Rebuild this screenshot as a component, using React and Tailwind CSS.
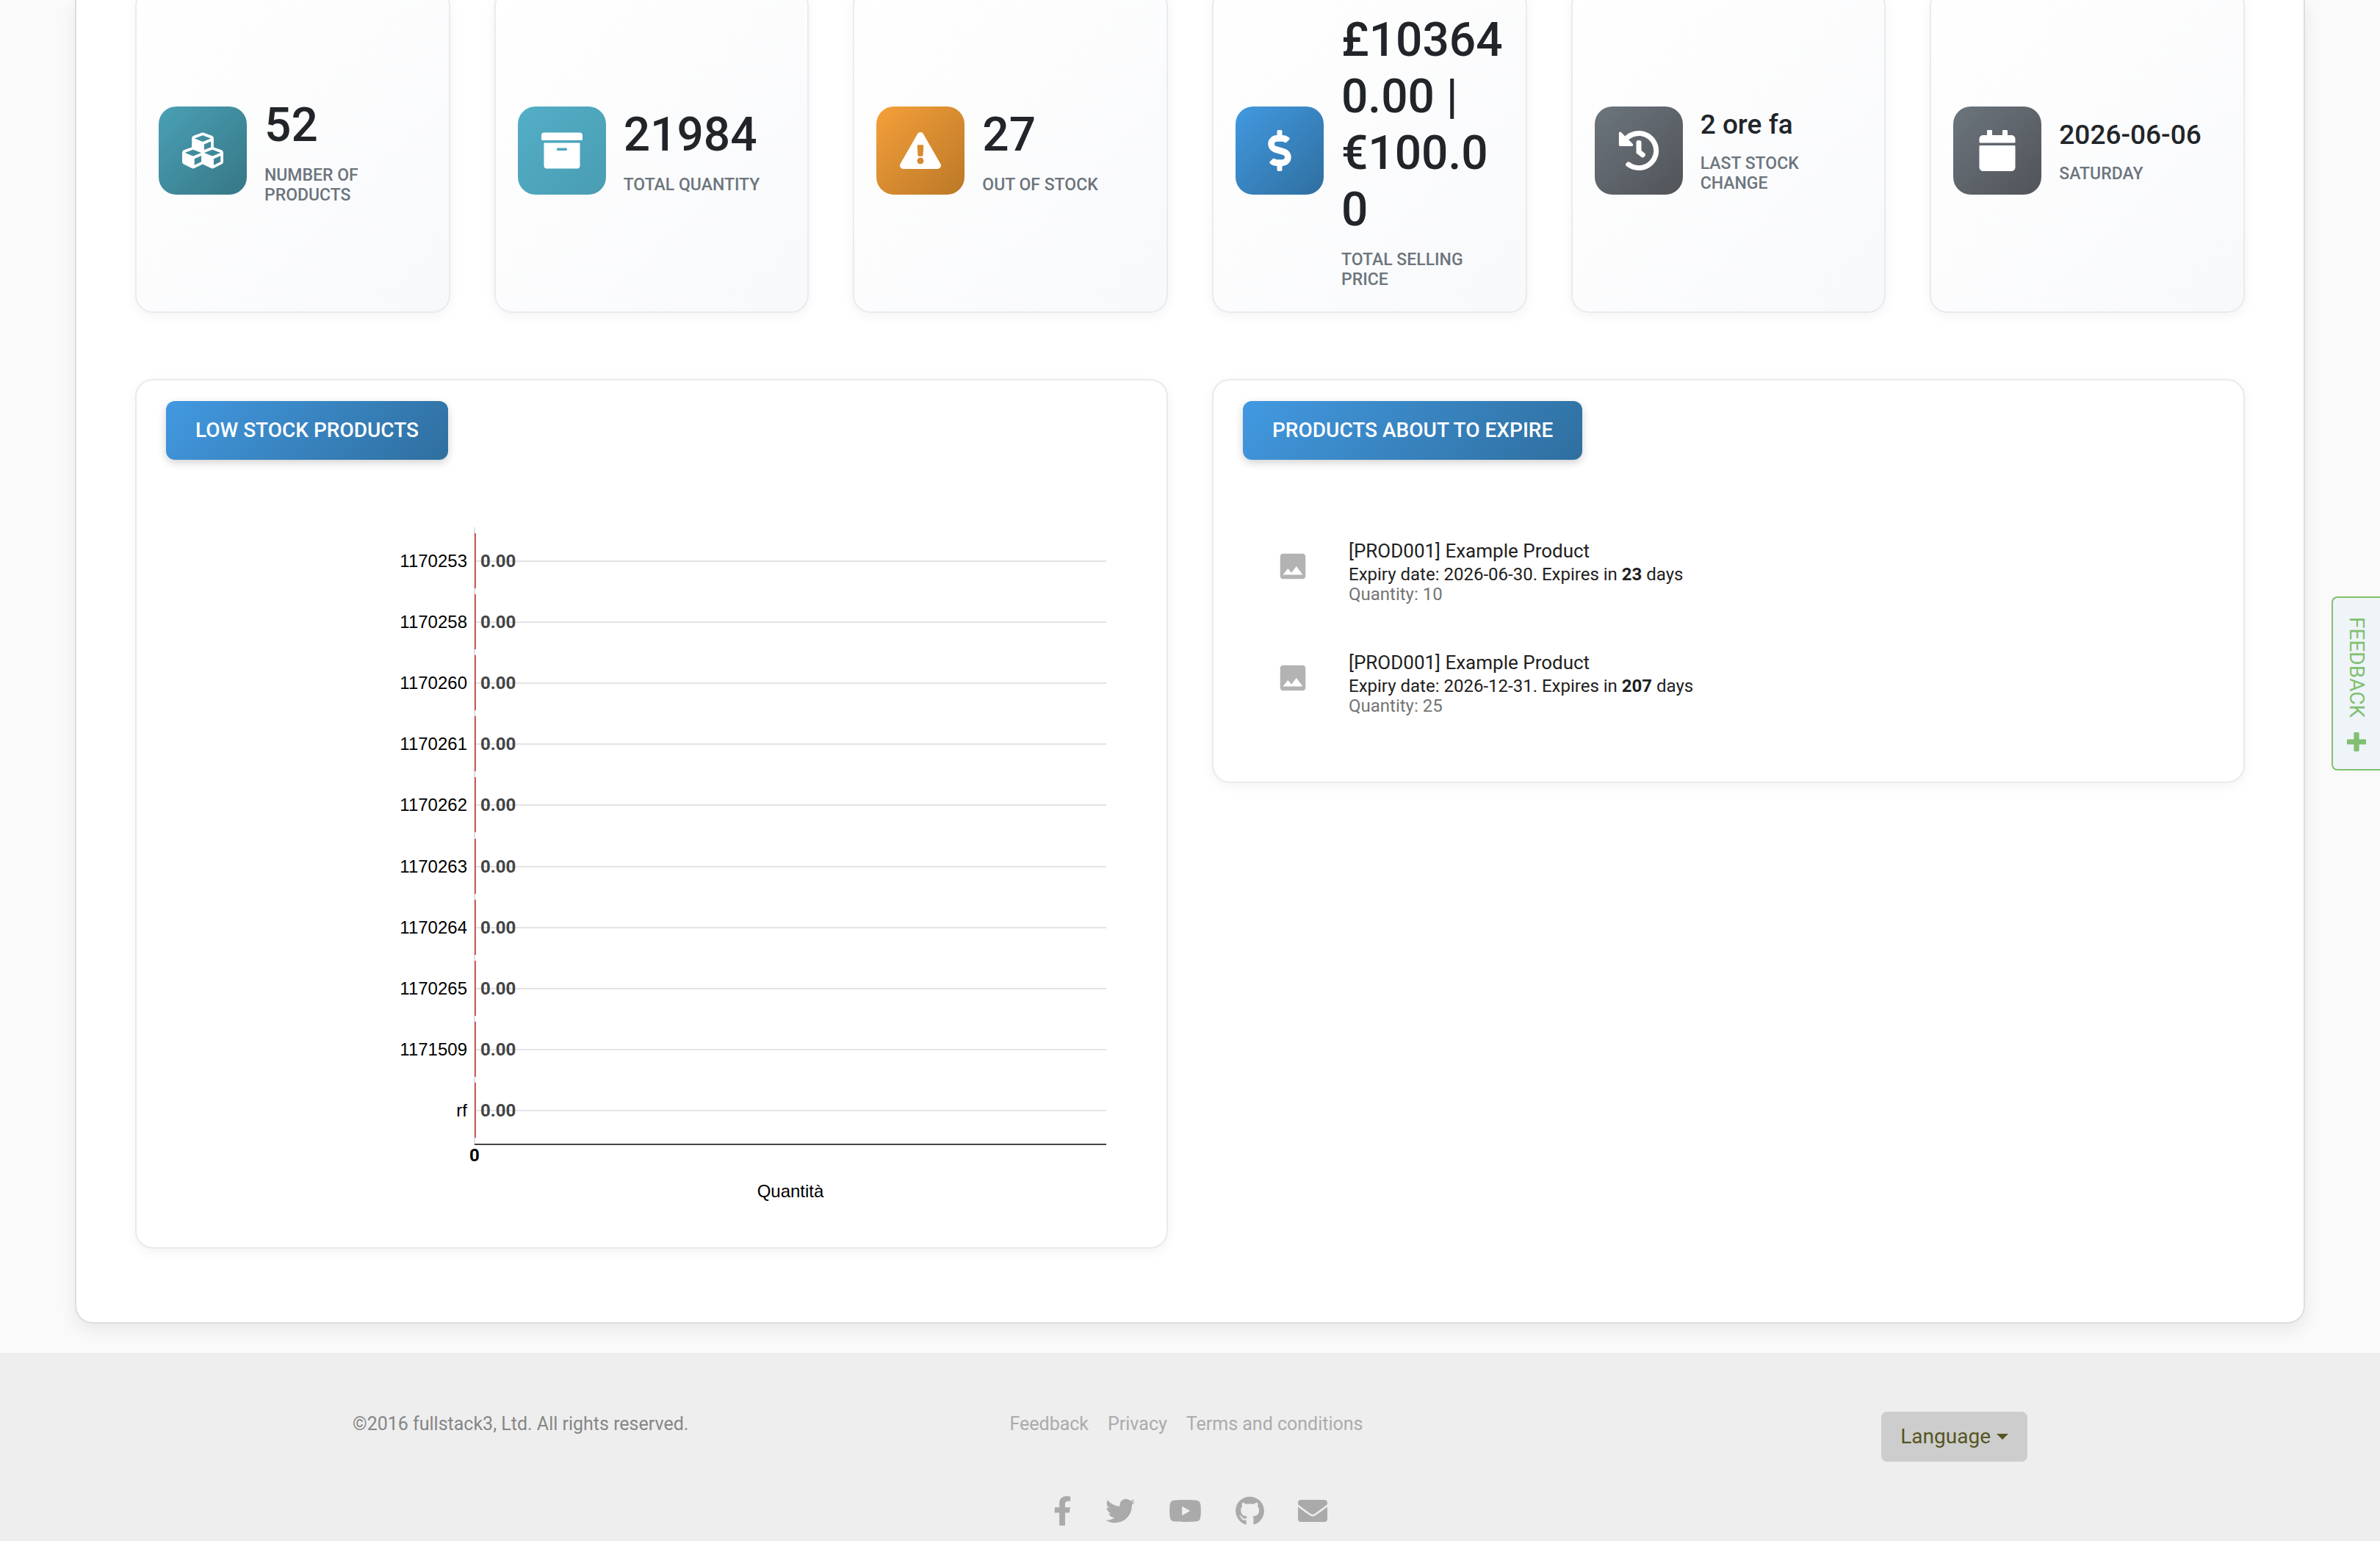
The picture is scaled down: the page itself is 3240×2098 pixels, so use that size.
import React from 'react';
import {
  FaCubes,
  FaArchive,
  FaExclamationTriangle,
  FaDollarSign,
  FaHistory,
  FaCalendar,
  FaFacebookF,
  FaTwitter,
  FaYoutube,
  FaGithub,
  FaEnvelope
} from 'react-icons/fa';
import { MdImage } from 'react-icons/md';

const stats = [
  { id: 'products', value: '52', label: 'Number of products', icon: FaCubes, color: 'from-[#4aa0b5] to-[#367786]' },
  { id: 'quantity', value: '21984', label: 'Total quantity', icon: FaArchive, color: 'from-[#53aec6] to-[#499db3]' },
  { id: 'out', value: '27', label: 'Out of stock', icon: FaExclamationTriangle, color: 'from-[#f5a03a] to-[#bb7827]' },
  { id: 'price', value: '£103640.00 | €100.00', label: 'Total selling price', icon: FaDollarSign, color: 'from-[#4299e1] to-[#2f6f9f]' },
  { id: 'change', value: '2 ore fa', label: 'Last stock change', icon: FaHistory, color: 'from-[#6c757d] to-[#515459]', small: true },
  { id: 'date', value: '2026-06-06', label: 'Saturday', icon: FaCalendar, color: 'from-[#6c757d] to-[#515459]', small: true }
];

const lowStock = [
  { name: '1170253', quantity: 0 },
  { name: '1170258', quantity: 0 },
  { name: '1170260', quantity: 0 },
  { name: '1170261', quantity: 0 },
  { name: '1170262', quantity: 0 },
  { name: '1170263', quantity: 0 },
  { name: '1170264', quantity: 0 },
  { name: '1170265', quantity: 0 },
  { name: '1171509', quantity: 0 },
  { name: 'rf', quantity: 0 }
];

const expiring = [
  { id: 1, name: '[PROD001] Example Product', date: '2026-06-30', days: 23, quantity: 10 },
  { id: 2, name: '[PROD001] Example Product', date: '2026-12-31', days: 207, quantity: 25 }
];

const socials = [
  { label: 'Facebook', icon: FaFacebookF, width: 'w-[25px]' },
  { label: 'Twitter', icon: FaTwitter, width: 'w-10' },
  { label: 'YouTube', icon: FaYoutube, width: 'w-[45px]' },
  { label: 'GitHub', icon: FaGithub, width: 'w-[39px]' },
  { label: 'Email', icon: FaEnvelope, width: 'w-10' }
];

const PlusIcon = ({ className }) => (
  <svg viewBox="0 32 448 448" fill="currentColor" className={className} aria-hidden="true">
    <path d="M448 294.2v-76.4c0-13.3-10.7-24-24-24H286.2V56c0-13.3-10.7-24-24-24h-76.4c-13.3 0-24 10.7-24 24v137.8H24c-13.3 0-24 10.7-24 24v76.4c0 13.3 10.7 24 24 24h137.8V456c0 13.3 10.7 24 24 24h76.4c13.3 0 24-10.7 24-24V318.2H424c13.3 0 24-10.7 24-24z" />
  </svg>
);

const StatCard = ({ value, label, icon: Icon, color, small }) => (
  <div className="flex items-center gap-6 rounded-3xl border-2 border-[#e9ebef] bg-linear-135 from-white to-[#f8f9fb] p-[30px] shadow-[0_4px_16px_rgba(0,0,0,0.05)]">
    <div className={`flex size-[120px] shrink-0 items-center justify-center rounded-3xl bg-linear-135 text-white ${color}`}>
      <Icon className="size-14" />
    </div>
    <div className="min-w-0 flex-1">
      <p className={`font-medium text-[#212529] break-words ${small ? 'text-[37px] leading-[46px]' : 'text-[64px] leading-[77px]'}`}>
        {value}
      </p>
      <p className="mt-4 text-[23px] leading-[27px] font-medium text-[#6c757d] uppercase">{label}</p>
    </div>
  </div>
);

const Panel = ({ title, className, children }) => (
  <section className={`rounded-3xl border-2 border-[#e9eaef] bg-white px-10 pt-7 shadow-[0_4px_16px_rgba(0,0,0,0.05)] ${className}`}>
    <h2 className="inline-block rounded-xl bg-linear-135 from-[#4299e1] to-[#2f6f9f] px-10 text-[28px] leading-[80px] font-medium text-white uppercase shadow-[0_4px_12px_rgba(0,0,0,0.18)]">
      {title}
    </h2>
    {children}
  </section>
);

const LowStockChart = () => (
  <svg viewBox="0 0 1322 990" className="mt-10 block w-full" role="img" aria-label="Low stock products">
    <rect x="419" y="52" width="2" height="840" fill="#e0e0e0" />
    {lowStock.map((item, index) => {
      const y = 98 + Math.round(index * 83.1);
      return (
        <g key={item.name}>
          <rect x="420" y={y - 1} width="860" height="2" fill="#e4e4e4" />
          <rect x="420" y={y - 38} width="2" height="75" fill="#cf5b5b" />
          <text x="410" y={y + 8} textAnchor="end" className="fill-black font-['Liberation_Sans',sans-serif] text-[24px]">
            {item.name}
          </text>
          <text x="428" y={y + 8} className="fill-[#444] text-[24px] font-bold">
            {item.quantity.toFixed(2)}
          </text>
        </g>
      );
    })}
    <rect x="420" y="891" width="860" height="2" fill="#444" />
    <text x="420" y="915" textAnchor="middle" className="fill-black text-[24px] font-bold">0</text>
    <text x="850" y="964" textAnchor="middle" className="fill-black font-['Liberation_Sans',sans-serif] text-[24px]">
      Quantità
    </text>
  </svg>
);

const ExpiringProduct = ({ name, date, days, quantity }) => (
  <li className="flex gap-9 py-[30px] pl-7">
    <div className="flex size-20 shrink-0 items-center justify-center text-[#b3b3b3]">
      <MdImage className="size-[46px]" />
    </div>
    <div className="text-[24px] leading-[27px] text-[#212121]">
      <p className="text-[26px] leading-[38px]">{name}</p>
      <p>
        Expiry date: {date}. Expires in <strong className="font-bold">{days}</strong> days
      </p>
      <p className="text-[#757575]">Quantity: {quantity}</p>
    </div>
  </li>
);

const Footer = () => (
  <footer className="bg-[#eee] pt-20 pb-[21px]">
    <div className="mx-auto grid max-w-[2280px] grid-cols-3 text-[25px] leading-[34px]">
      <p className="text-[#868686]">©2016 fullstack3, Ltd. All rights reserved.</p>
      <nav className="flex justify-center gap-[26px] pr-[10px] text-[#ababab]">
        <a href="#feedback">Feedback</a>
        <a href="#privacy">Privacy</a>
        <a href="#terms">Terms and conditions</a>
      </nav>
      <button
        type="button"
        className="flex h-[68px] items-center gap-2 justify-self-end rounded-lg bg-[#cdcdcd] px-[26px] text-[28px] text-[#555522]"
      >
        Language
        <span className="border-x-8 border-t-8 border-x-transparent border-t-current"></span>
      </button>
    </div>
    <div className="mt-[47px] flex justify-center gap-[46px] text-[#aaa]">
      {socials.map(({ label, icon: Icon, width }) => (
        <a key={label} href={`#${label.toLowerCase()}`} aria-label={label}>
          <Icon className={`h-10 ${width}`} />
        </a>
      ))}
    </div>
  </footer>
);

const App = () => {
  return (
    <div className="relative min-h-screen overflow-hidden bg-[#fafafa] font-[Roboto,sans-serif]">
      <main className="mx-[102px] mb-10 flex flex-col rounded-b-3xl border-x-2 border-b-2 border-[#dedede] bg-white px-20 pb-[100px] shadow-[0_8px_24px_rgba(0,0,0,0.08)]">
        <div className="-mt-4 grid grid-cols-6 gap-[60px]">
          {stats.map(stat => (
            <StatCard key={stat.id} {...stat} />
          ))}
        </div>

        <div className="mt-[90px] grid grid-cols-2 items-start gap-[60px]">
          <Panel title="Low stock products" className="pb-[42px]">
            <LowStockChart />
          </Panel>
          <Panel title="Products about to expire" className="pb-[59px]">
            <ul className="mt-[75px]">
              {expiring.map(product => (
                <ExpiringProduct key={product.id} {...product} />
              ))}
            </ul>
          </Panel>
        </div>
      </main>

      <Footer />

      {/* Feedback tab on the right edge of the window */}
      <button
        type="button"
        className="absolute top-[812px] right-0 flex h-[237px] w-[66px] items-center gap-5 rounded-l-lg border-2 border-r-0 border-[#81c070] bg-[#eff4f9] px-[26px] text-[28px] leading-[64px] text-[#81c070] [writing-mode:vertical-rl]"
      >
        FEEDBACK
        <PlusIcon className="size-[26px] shrink-0" />
      </button>
    </div>
  );
};

export default App;
